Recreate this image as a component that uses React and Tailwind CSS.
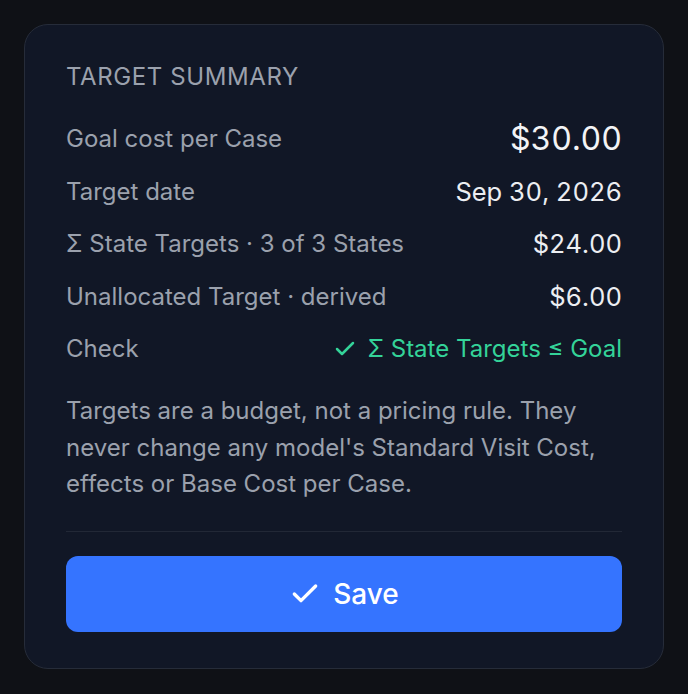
import React from 'react';

const rows = [
  { label: 'Goal cost per Case', value: '$30.00', big: true },
  { label: 'Target date', value: 'Sep 30, 2026' },
  { label: 'Σ State Targets · 3 of 3 States', value: '$24.00' },
  { label: 'Unallocated Target · derived', value: '$6.00' },
];

const Check = ({ className }) => (
  <svg viewBox="0 0 24 24" fill="none" stroke="currentColor" strokeWidth="2.5" strokeLinecap="round" strokeLinejoin="round" className={className}>
    <path d="M20 6 9 17l-5-5" />
  </svg>
);

const App = () => {
  return (
    <div className="min-h-screen bg-[#0f1116] p-6" style={{ fontFamily: 'Inter, "Noto Sans", sans-serif' }}>
      <div className="w-[640px] rounded-3xl border border-[#262c39] bg-[#111726] px-[41px] pt-[34px] pb-[36px]">
        <h2 className="text-[24px] leading-9 uppercase tracking-wide text-[#9ba1ad]">Target Summary</h2>

        <div className="mt-[26px] flex flex-col gap-[16.5px]">
          {rows.map((r) => (
            <div key={r.label} className="flex items-center justify-between h-9">
              <span className="text-[24px] leading-9 text-[#9ba1ad]">{r.label}</span>
              <span className={r.big ? 'text-[32px] leading-9 tabular-nums text-[#f3f4f6]' : 'text-[25.5px] leading-9 tabular-nums text-[#eceef2]'}>
                {r.value}
              </span>
            </div>
          ))}
          <div className="flex items-center justify-between h-9">
            <span className="text-[24px] leading-9 text-[#9ba1ad]">Check</span>
            <span className="flex items-center gap-[10px] text-[24px] leading-9 text-[#34d399]">
              <Check className="w-6 h-6" />
              Σ State Targets ≤ Goal
            </span>
          </div>
        </div>

        <p className="mt-[26px] text-[24px] leading-[36.5px] text-[#9ba1ad]">
          Targets are a budget, not a pricing rule. They never change any model's Standard Visit Cost, effects or Base Cost per Case.
        </p>

        <div className="mt-[28px] border-t border-[#222836]" />

        <button className="mt-[24px] flex h-[76px] w-full items-center justify-center gap-3 rounded-xl bg-[#3574ff] text-[28px] font-medium text-white">
          <Check className="w-8 h-8" />
          Save
        </button>
      </div>
    </div>
  );
};

export default App;
